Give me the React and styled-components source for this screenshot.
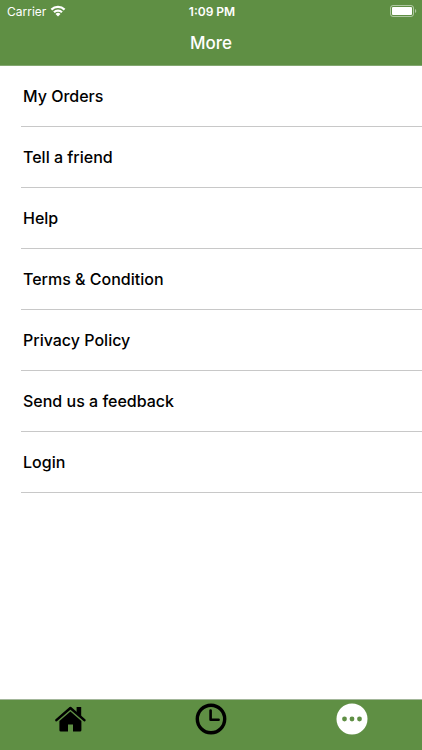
import styled, { createGlobalStyle } from "styled-components";

const menuItems = [
  "My Orders",
  "Tell a friend",
  "Help",
  "Terms & Condition",
  "Privacy Policy",
  "Send us a feedback",
  "Login",
];

const tabs = [
  { name: "Home", icon: <HomeIcon /> },
  { name: "History", icon: <ClockIcon /> },
  { name: "More", icon: <MoreIcon /> },
];

export default function App() {
  return (
    <>
      <GlobalStyle />
      <Screen>
        <Header>
          <StatusBar>
            <Carrier>
              <span>Carrier</span>
              <WifiIcon />
            </Carrier>
            <Time>1:09 PM</Time>
            <Battery>
              <BatteryIcon />
            </Battery>
          </StatusBar>
          <Title>More</Title>
        </Header>
        <Menu>
          {menuItems.map((item) => (
            <MenuRow key={item}>
              <MenuButton type="button">{item}</MenuButton>
            </MenuRow>
          ))}
        </Menu>
        <TabBar>
          {tabs.map((tab) => (
            <TabButton key={tab.name} type="button" aria-label={tab.name}>
              {tab.icon}
            </TabButton>
          ))}
        </TabBar>
      </Screen>
    </>
  );
}

function WifiIcon() {
  return (
    <svg width="16" height="12" viewBox="0 0 16 12" aria-hidden="true">
      <g fill="none" stroke="#fff" strokeWidth="2.2">
        <path d="M1.4 4.6a9.4 9.4 0 0 1 13.2 0" />
        <path d="M4 7.3a5.7 5.7 0 0 1 8 0" />
      </g>
      <path d="M8 11.4L5.5 8.9a3.6 3.6 0 0 1 5 0z" fill="#fff" />
    </svg>
  );
}

function BatteryIcon() {
  return (
    <svg width="27" height="12" viewBox="0 0 27 12" aria-hidden="true">
      <rect
        x="0.5"
        y="0.5"
        width="23"
        height="11"
        rx="2.5"
        fill="none"
        stroke="#fff"
        strokeOpacity="0.5"
      />
      <rect x="2" y="2" width="20" height="8" rx="1" fill="#fff" />
      <path d="M25 4a2.2 2.2 0 0 1 0 4z" fill="#fff" fillOpacity="0.5" />
    </svg>
  );
}

function HomeIcon() {
  return (
    <svg width="32" height="32" viewBox="0 0 32 32" aria-hidden="true">
      <path
        d="M2.4 17.1L16.4 5l14 12.1"
        fill="none"
        stroke="#000"
        strokeWidth="2.5"
        strokeLinecap="round"
        strokeLinejoin="round"
      />
      <path d="M22.6 4h4.6v9.8l-4.6-4z" />
      <path d="M16.4 8.4l11 9.5v9.3a1.4 1.4 0 0 1-1.4 1.4h-7v-7.2h-5v7.2H6.8a1.4 1.4 0 0 1-1.4-1.4v-9.3z" />
    </svg>
  );
}

function ClockIcon() {
  return (
    <svg width="32" height="32" viewBox="0 0 32 32" aria-hidden="true">
      <g fill="none" stroke="#000">
        <circle cx="16" cy="16" r="13.7" strokeWidth="3.4" />
        <path
          d="M15.6 7.5v9.3h8"
          strokeWidth="2.6"
          strokeLinecap="round"
          strokeLinejoin="round"
        />
      </g>
    </svg>
  );
}

function MoreIcon() {
  return (
    <svg width="32" height="32" viewBox="0 0 32 32" aria-hidden="true">
      <circle cx="16" cy="16" r="15.5" fill="#fff" />
      <g fill="#5f8f44">
        <circle cx="8.5" cy="16" r="2.4" />
        <circle cx="16" cy="16" r="2.4" />
        <circle cx="23.5" cy="16" r="2.4" />
      </g>
    </svg>
  );
}

const GlobalStyle = createGlobalStyle`
  body {
    margin: 0;
    background-color: #fff;
    font-family: Inter, "Liberation Sans", sans-serif;
  }
`;

const Screen = styled.div`
  display: flex;
  flex-direction: column;
  min-height: 100vh;
`;

const Header = styled.header`
  border-bottom: 1px solid #83a770;
  background-color: #5f8f44;
  color: #fff;
`;

const StatusBar = styled.div`
  display: grid;
  grid-template-columns: 1fr auto 1fr;
  align-items: center;
  height: 22px;
  padding: 0 5px 0 7px;
  font-size: 12px;
`;

const Carrier = styled.div`
  display: flex;
  align-items: center;
  gap: 4px;
`;

const Time = styled.div`
  font-weight: 600;
`;

const Battery = styled.div`
  display: flex;
  justify-content: flex-end;
`;

const Title = styled.h1`
  margin: 0;
  font-size: 17px;
  font-weight: 500;
  line-height: 43px;
  text-align: center;
`;

const Menu = styled.ul`
  flex: 1;
  margin: 0;
  padding: 0 0 0 21px;
  list-style: none;
`;

const MenuRow = styled.li`
  border-bottom: 1px solid #c8c8c8;
`;

const MenuButton = styled.button`
  display: block;
  width: 100%;
  height: 60px;
  padding: 0 2px;
  border: none;
  background: none;
  color: #000;
  font-family: inherit;
  font-size: 16px;
  font-weight: 500;
  text-align: left;
`;

const TabBar = styled.nav`
  display: grid;
  grid-template-columns: repeat(3, 1fr);
  height: 50px;
  border-top: 1px solid #a3b79a;
  background-color: #5f8f44;
`;

const TabButton = styled.button`
  display: flex;
  justify-content: center;
  padding: 3px 0 0;
  border: none;
  background: none;
`;
